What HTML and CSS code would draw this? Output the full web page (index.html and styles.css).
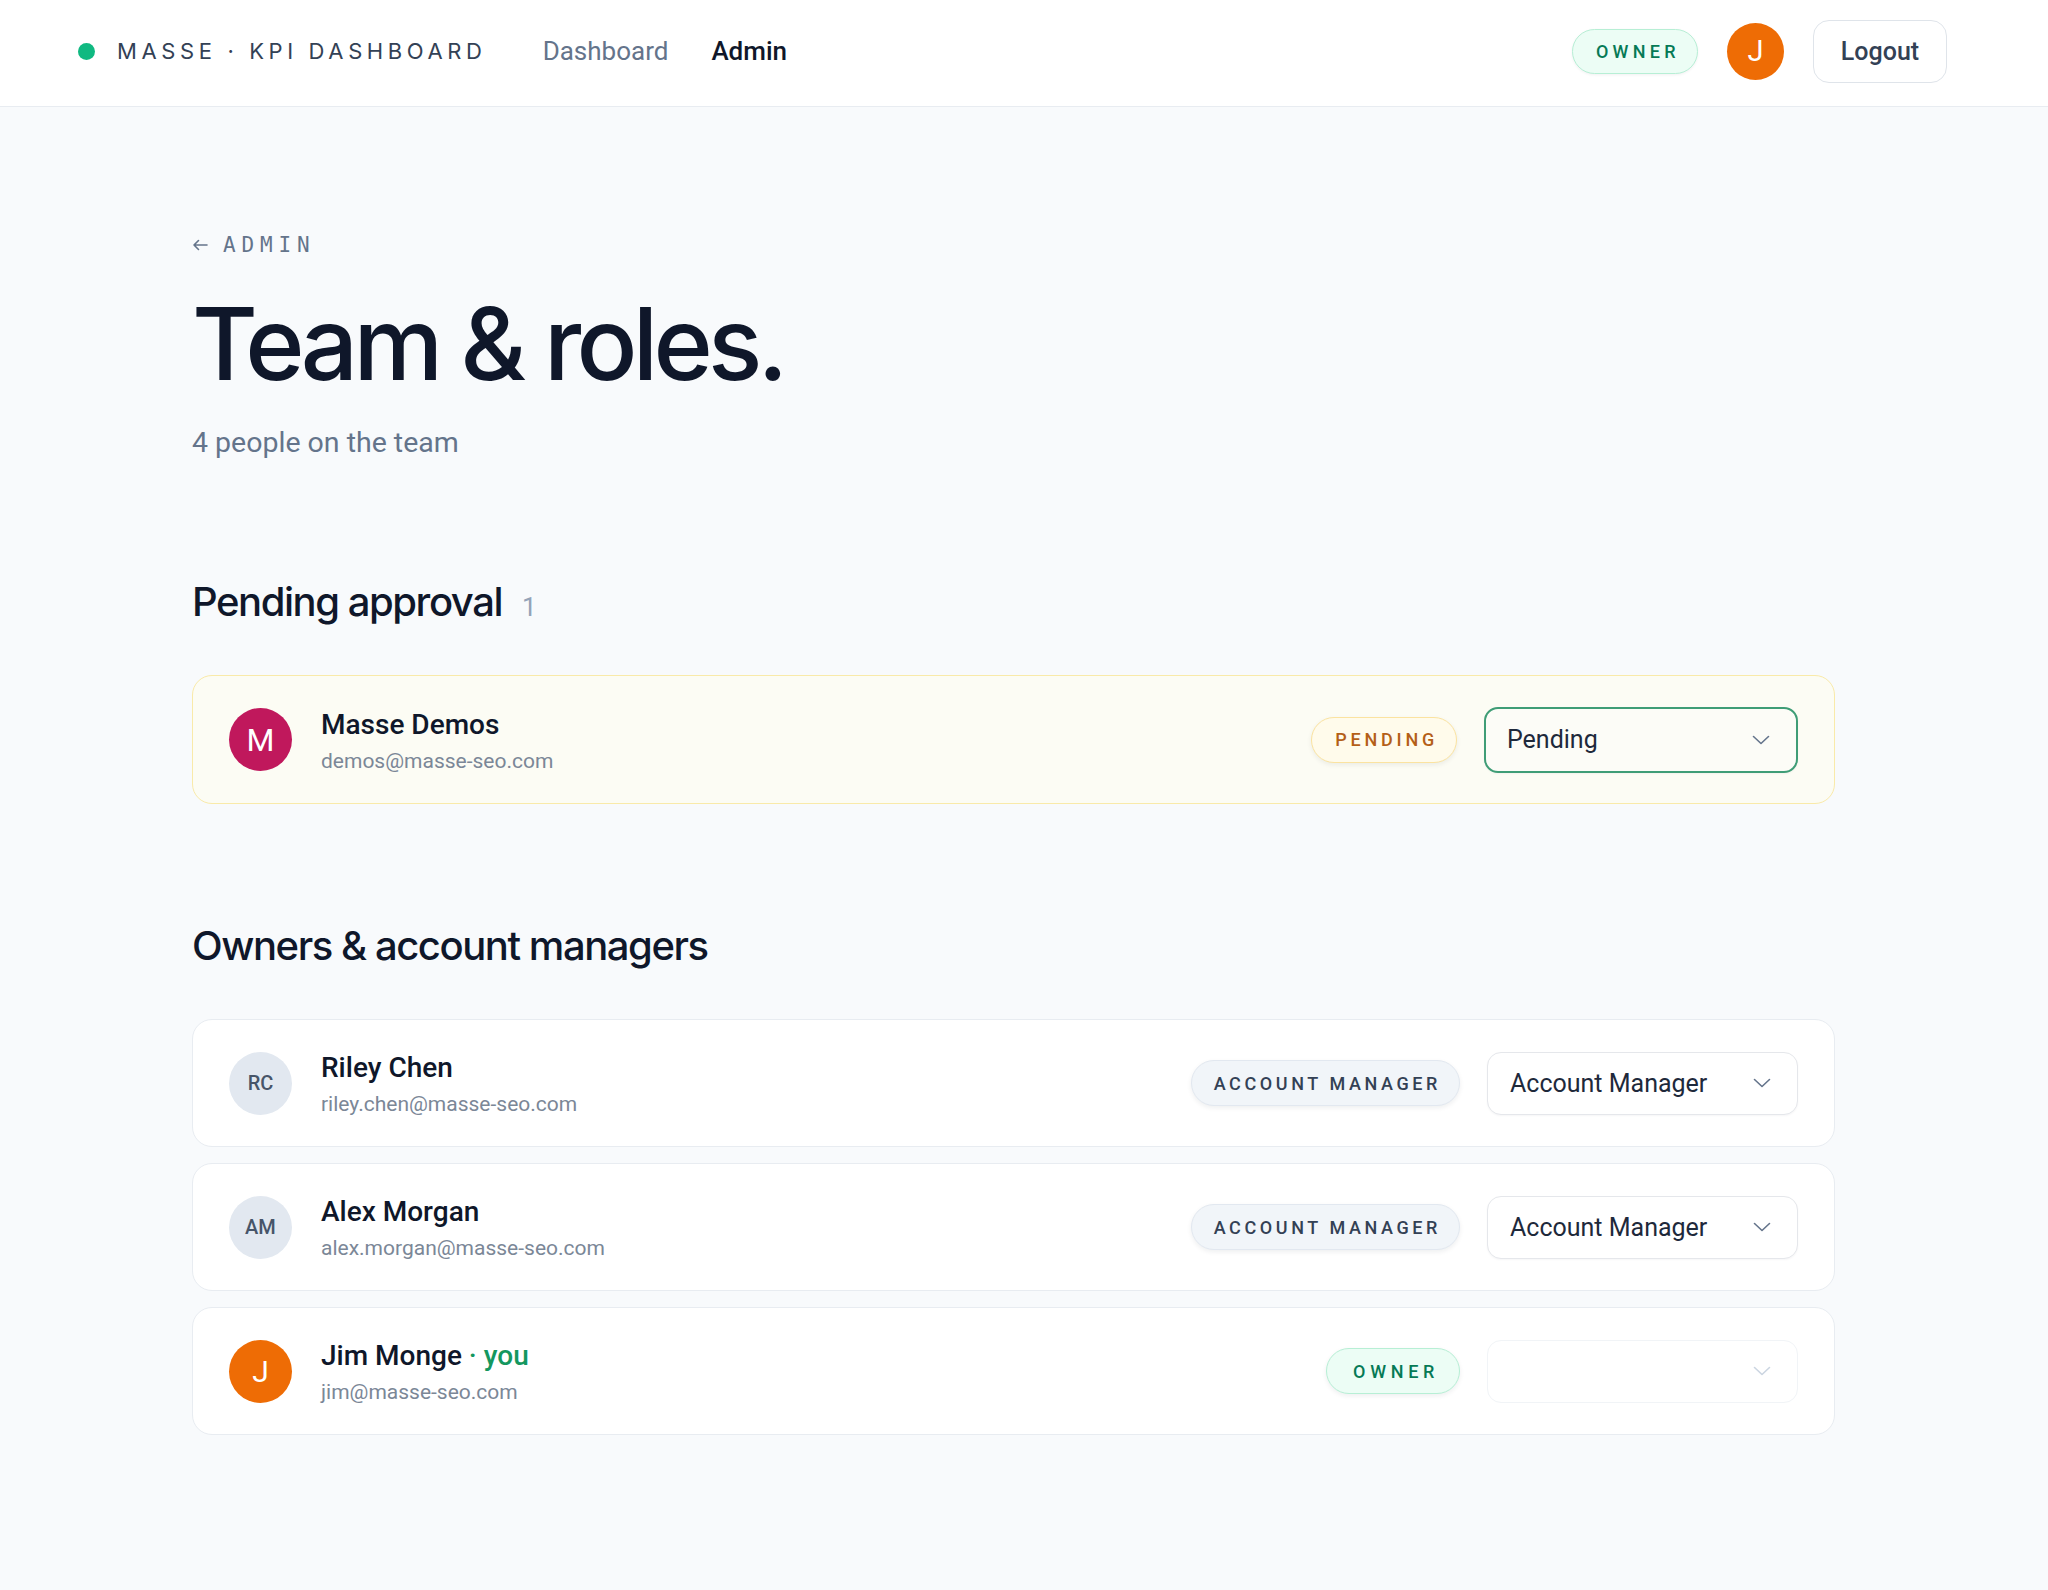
FILE: index.html
```html
<!DOCTYPE html>
<html lang="en">
<head>
<meta charset="utf-8">
<title>Team &amp; roles · Masse KPI Dashboard</title>
<link rel="stylesheet" href="styles.css">
</head>
<body>
<header class="topbar">
  <div class="brand">
    <span class="brand-dot"></span>
    <span class="brand-name">MASSE · KPI DASHBOARD</span>
  </div>
  <nav class="nav">
    <a class="nav-link">Dashboard</a>
    <a class="nav-link active">Admin</a>
  </nav>
  <div class="topbar-right">
    <span class="badge badge-owner badge-top">OWNER</span>
    <span class="avatar avatar-orange avatar-top">J</span>
    <button class="btn-logout">Logout</button>
  </div>
</header>

<main class="page">
  <a class="back">
    <svg class="back-arrow" width="16" height="12" viewBox="0 0 16 12"><path d="M15 6H2M6.5 1.5L2 6l4.5 4.5" fill="none" stroke="#64748b" stroke-width="1.6" stroke-linecap="round" stroke-linejoin="round"/></svg>
    <span>ADMIN</span>
  </a>
  <h1 class="title">Team &amp; roles.</h1>
  <p class="subtitle">4 people on the team</p>

  <section class="section section-pending">
    <h2 class="section-title">Pending approval <span class="count">1</span></h2>
    <div class="list">
      <div class="card card-pending">
        <span class="avatar avatar-pink">M</span>
        <div class="person">
          <div class="name">Masse Demos</div>
          <div class="email">demos@masse-seo.com</div>
        </div>
        <span class="badge badge-pending">PENDING</span>
        <div class="select select-active">
          <span>Pending</span>
          <svg class="chev" width="18" height="10" viewBox="0 0 18 10"><path d="M1.5 1.5L9 8.5l7.5-7" fill="none" stroke="#64748b" stroke-width="1.6" stroke-linecap="round" stroke-linejoin="round"/></svg>
        </div>
      </div>
    </div>
  </section>

  <section class="section section-owners">
    <h2 class="section-title">Owners &amp; account managers</h2>
    <div class="list">
      <div class="card">
        <span class="avatar avatar-grey">RC</span>
        <div class="person">
          <div class="name">Riley Chen</div>
          <div class="email">riley.chen@masse-seo.com</div>
        </div>
        <span class="badge badge-am">ACCOUNT MANAGER</span>
        <div class="select">
          <span>Account Manager</span>
          <svg class="chev" width="18" height="10" viewBox="0 0 18 10"><path d="M1.5 1.5L9 8.5l7.5-7" fill="none" stroke="#64748b" stroke-width="1.6" stroke-linecap="round" stroke-linejoin="round"/></svg>
        </div>
      </div>
      <div class="card">
        <span class="avatar avatar-grey">AM</span>
        <div class="person">
          <div class="name">Alex Morgan</div>
          <div class="email">alex.morgan@masse-seo.com</div>
        </div>
        <span class="badge badge-am">ACCOUNT MANAGER</span>
        <div class="select">
          <span>Account Manager</span>
          <svg class="chev" width="18" height="10" viewBox="0 0 18 10"><path d="M1.5 1.5L9 8.5l7.5-7" fill="none" stroke="#64748b" stroke-width="1.6" stroke-linecap="round" stroke-linejoin="round"/></svg>
        </div>
      </div>
      <div class="card">
        <span class="avatar avatar-orange">J</span>
        <div class="person">
          <div class="name">Jim Monge <span class="you">· you</span></div>
          <div class="email">jim@masse-seo.com</div>
        </div>
        <span class="badge badge-owner">OWNER</span>
        <div class="select select-disabled">
          <span></span>
          <svg class="chev" width="18" height="10" viewBox="0 0 18 10"><path d="M1.5 1.5L9 8.5l7.5-7" fill="none" stroke="#cbd5e1" stroke-width="1.6" stroke-linecap="round" stroke-linejoin="round"/></svg>
        </div>
      </div>
    </div>
  </section>
</main>
</body>
</html>
```

FILE: styles.css
```css
* { box-sizing: border-box; }

html, body { margin: 0; }

body {
  background: #f8fafc;
  font-family: Roboto, "Noto Sans", "Liberation Sans", sans-serif;
  color: #0f172a;
}

/* ---------- top bar ---------- */
.topbar {
  display: flex;
  align-items: center;
  height: 107px;
  padding: 0 101px 4px 78px;
  background: #ffffff;
  border-bottom: 1px solid #e8ecf1;
}

.brand {
  display: flex;
  align-items: center;
  gap: 22px;
}

.brand-dot {
  width: 17px;
  height: 17px;
  border-radius: 50%;
  background: #10b981;
}

.brand-name {
  font-family: Inter, "Liberation Sans", sans-serif;
  font-size: 22px;
  font-weight: 400;
  letter-spacing: 0.21em;
  color: #334155;
}

.nav {
  display: flex;
  align-items: center;
  gap: 43px;
  margin-left: 56px;
}

.nav-link {
  font-size: 26px;
  color: #64748b;
  text-decoration: none;
}

.nav-link.active {
  color: #0f172a;
  font-weight: 500;
}

.topbar-right {
  margin-left: auto;
  display: flex;
  align-items: center;
  gap: 29px;
}

.btn-logout {
  width: 134px;
  height: 63px;
  background: #ffffff;
  border: 1.5px solid #dfe4ea;
  border-radius: 16px;
  font-family: Roboto, "Noto Sans", sans-serif;
  font-size: 25px;
  font-weight: 500;
  color: #334155;
}

/* ---------- avatars ---------- */
.avatar {
  flex: none;
  display: flex;
  align-items: center;
  justify-content: center;
  width: 63px;
  height: 63px;
  border-radius: 50%;
  font-size: 30px;
  color: #ffffff;
}

.avatar-top {
  width: 57px;
  height: 57px;
  font-size: 29px;
}

.avatar-orange { background: #ee6c05; }
.avatar-pink { background: #c0185c; font-size: 32px; }
.avatar-grey {
  background: #e2e8f0;
  color: #475569;
  font-size: 20px;
  font-weight: 500;
}

/* ---------- badges ---------- */
.badge {
  flex: none;
  display: inline-flex;
  align-items: center;
  height: 46px;
  padding: 0 18px 0 22px;
  border-radius: 999px;
  font-size: 18px;
  font-weight: 400;
  letter-spacing: 0.21em;
  border: 1.5px solid transparent;
  box-shadow: 0 2px 5px rgba(15, 23, 42, 0.07);
}

.badge-owner {
  background: #ecfdf5;
  border-color: #b7efd5;
  color: #067a55;
  font-weight: 500;
  letter-spacing: 0.26em;
  padding: 0 20px 0 26px;
}

.badge-top {
  height: 45px;
  font-size: 18px;
  letter-spacing: 0.24em;
  padding: 0 17px 0 23px;
  box-shadow: 0 1px 3px rgba(15, 23, 42, 0.06);
}

.badge-pending {
  background: #fffbeb;
  border-color: #fbe3a0;
  color: #b45f17;
  font-weight: 500;
  padding: 0 18px 0 23px;
}

.badge-am {
  background: #f1f5f9;
  border-color: #e2e8f0;
  color: #334155;
  font-weight: 500;
  letter-spacing: 0.2em;
}

/* ---------- page ---------- */
.page {
  padding: 126px 213px 160px 192px;
}

.back {
  display: flex;
  align-items: center;
  gap: 15px;
  height: 24px;
  font-family: "DejaVu Sans Mono", "Liberation Mono", monospace;
  font-size: 21px;
  letter-spacing: 0.28em;
  color: #64748b;
  text-decoration: none;
}

.title {
  margin: 36px 0 0;
  font-family: Inter, "Liberation Sans", sans-serif;
  font-size: 101px;
  line-height: 100px;
  font-weight: 500;
  letter-spacing: -0.047em;
  color: #0f172a;
}

.subtitle {
  margin: 31px 0 0;
  font-size: 28.5px;
  line-height: 38px;
  color: #64748b;
}

.section-pending { margin-top: 117px; }
.section-owners { margin-top: 119px; }

.section-title {
  display: flex;
  align-items: baseline;
  margin: 0 0 45px;
  font-family: Inter, "Liberation Sans", sans-serif;
  font-size: 40px;
  line-height: 46px;
  font-weight: 500;
  letter-spacing: -0.036em;
  color: #0f172a;
}

.section-owners .section-title {
  margin-bottom: 50px;
}

.count {
  margin-left: 20px;
  font-family: Roboto, sans-serif;
  font-size: 26px;
  font-weight: 400;
  letter-spacing: 0;
  color: #94a3b8;
}

.list {
  display: flex;
  flex-direction: column;
  gap: 16px;
}

.card {
  display: flex;
  align-items: center;
  gap: 27px;
  height: 128px;
  padding: 0 36px;
  background: #ffffff;
  border: 1.5px solid #e8ecf1;
  border-radius: 20px;
}

.card-pending {
  height: 129px;
  background: #fcfcf4;
  border-color: #f9eaa9;
}

.person {
  flex: 1;
  margin-left: 2px;
  padding-top: 3px;
}

.name {
  font-size: 28px;
  line-height: 32px;
  font-weight: 500;
  color: #0f172a;
}

.you {
  color: #14975f;
  font-weight: 500;
}

.email {
  margin-top: 7px;
  font-size: 21px;
  line-height: 26px;
  color: #7b8797;
}

/* ---------- select ---------- */
.select {
  flex: none;
  display: flex;
  align-items: center;
  justify-content: space-between;
  width: 311px;
  height: 63px;
  padding: 0 26px 0 22px;
  background: #ffffff;
  border: 1.5px solid #e5e7eb;
  border-radius: 14px;
  box-shadow: 0 1px 2px rgba(15, 23, 42, 0.04);
  font-size: 25px;
  color: #1e293b;
}

.select-active {
  width: 314px;
  height: 66px;
  border: 2px solid #3f9d76;
  background: #fcfcf7;
  padding-left: 21px;
}

.select-disabled {
  border-color: #f1f4f7;
  box-shadow: none;
}

.chev { flex: none; }
```
